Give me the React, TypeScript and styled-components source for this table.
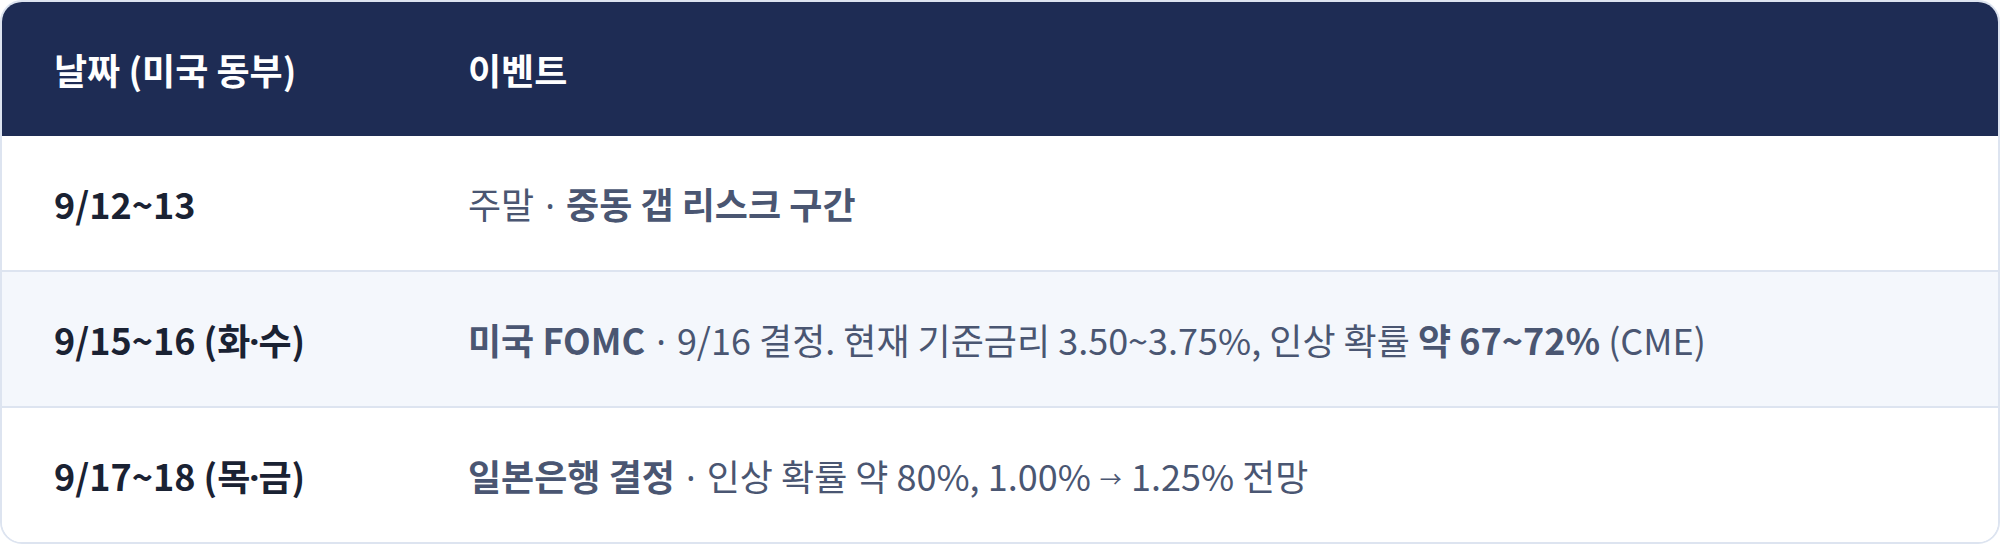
import React from "react";
import styled, { createGlobalStyle } from "styled-components";

const Global = createGlobalStyle`
  html, body { margin: 0; padding: 0; background: #ffffff; }
  body { font-family: "Noto Sans CJK KR", "Noto Sans", sans-serif; }
  * { box-sizing: border-box; }
`;

const Card = styled.div`
  width: 2000px;
  border: 2px solid #dde4f0;
  border-radius: 22px;
  overflow: hidden;
  background: #ffffff;
`;

const Row = styled.div<{ $variant: "head" | "plain" | "alt"; $first?: boolean }>`
  display: grid;
  grid-template-columns: 414px 1fr;
  height: ${(p) => (p.$variant === "head" || p.$first ? 134 : 136)}px;
  border-top: ${(p) => (p.$variant === "head" || p.$first ? "none" : "2px solid #dde4f0")};
  background: ${(p) =>
    p.$variant === "head" ? "#1e2c54" : p.$variant === "alt" ? "#f4f7fc" : "#ffffff"};
`;

const Cell = styled.div<{ $kind: "head" | "date" | "event" }>`
  display: flex;
  align-items: center;
  padding-left: 52px;
  font-size: 36px;
  white-space: pre;
  color: ${(p) => (p.$kind === "head" ? "#ffffff" : p.$kind === "date" ? "#1a2233" : "#4a5672")};
  font-weight: ${(p) => (p.$kind === "event" ? 400 : 700)};
`;

const Line = styled.span``;

const Strong = styled.strong`
  font-weight: 700;
`;

const Dot = styled.span<{ $tight?: boolean }>`
  font-family: "Noto Sans", "DejaVu Sans", sans-serif;
  margin: 0 ${(p) => (p.$tight ? -1 : 3)}px;
`;

const Arrow = styled.span`
  display: inline-block;
  font-size: 22px;
  vertical-align: 4px;
  margin: 0 1px;
`;

const rows = [
  {
    date: <>9/12~13</>,
    event: (
      <>
        주말 <Dot>·</Dot> <Strong>중동 갭 리스크 구간</Strong>
      </>
    ),
  },
  {
    date: (
      <>
        9/15~16 (화<Dot $tight>·</Dot>수)
      </>
    ),
    event: (
      <>
        <Strong>미국 FOMC</Strong> <Dot>·</Dot> 9/16 결정. 현재 기준금리 3.50~3.75%, 인상 확률{" "}
        <Strong>약 67~72%</Strong> (CME)
      </>
    ),
  },
  {
    date: (
      <>
        9/17~18 (목<Dot $tight>·</Dot>금)
      </>
    ),
    event: (
      <>
        <Strong>일본은행 결정</Strong> <Dot>·</Dot> 인상 확률 약 80%, 1.00% <Arrow>→</Arrow> 1.25% 전망
      </>
    ),
  },
];

export default function App() {
  return (
    <>
      <Global />
      <Card>
        <Row $variant="head">
          <Cell $kind="head">
            <Line>날짜 (미국 동부)</Line>
          </Cell>
          <Cell $kind="head">
            <Line>이벤트</Line>
          </Cell>
        </Row>
        {rows.map((r, i) => (
          <Row key={i} $variant={i % 2 === 1 ? "alt" : "plain"} $first={i === 0}>
            <Cell $kind="date">
              <Line>{r.date}</Line>
            </Cell>
            <Cell $kind="event">
              <Line>{r.event}</Line>
            </Cell>
          </Row>
        ))}
      </Card>
    </>
  );
}
